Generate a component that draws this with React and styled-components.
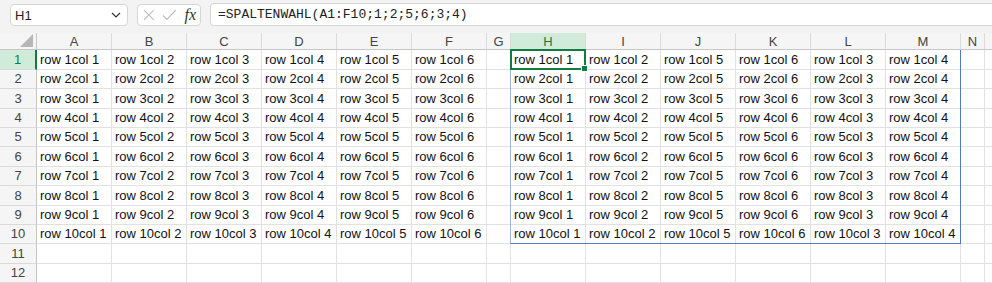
import React from "react";
import styled, { createGlobalStyle } from "styled-components";

const Global = createGlobalStyle`
  html, body { margin: 0; padding: 0; background: #ffffff; overflow: hidden; }
  body { font-family: "Liberation Sans", Arial, sans-serif; }
`;

const Page = styled.div`
  width: 992px;
  height: 283px;
  overflow: hidden;
  background: #ffffff;
`;

const FormulaBar = styled.div`
  display: flex;
  align-items: flex-start;
  gap: 9px;
  height: 33px;
  box-sizing: border-box;
  padding: 4px 0 0 10px;
  background: #f3f3f3;
`;

const Box = styled.div`
  display: flex;
  align-items: center;
  box-sizing: border-box;
  height: 22px;
  background: #ffffff;
  border: 1px solid #d6d6d6;
  border-radius: 4px;
`;

const NameBox = styled(Box)`
  width: 118px;
  justify-content: space-between;
  padding: 0 6px 0 4px;
  font-size: 13px;
  color: #222;
`;

const FxBox = styled(Box)`
  width: 64px;
  gap: 7px;
  padding: 0 4px 0 5px;
`;

const FxText = styled.span`
  font-family: "Liberation Serif", "Times New Roman", serif;
  font-style: italic;
  font-size: 16px;
  color: #333;
  line-height: 1;
  margin-left: 1px;
`;

const FormulaInput = styled(Box)`
  flex: 1;
  margin-top: -1px;
  height: 23px;
  border-right: none;
  border-radius: 4px 0 0 4px;
  padding-left: 7px;
  font-family: "Liberation Mono", "DejaVu Sans Mono", monospace;
  font-size: 13px;
  color: #222;
`;

const Grid = styled.div`
  display: grid;
  grid-template-columns: 37px repeat(6, 75px) 24px repeat(6, 75px) 24px 75px;
  grid-template-rows: 17px 20px 19px 20px 19px 19px 20px 19px 20px 19px 19px 20px 19px;
  font-size: 13px;
`;

const Cell = styled.div`
  grid-row: ${(p) => p.$r};
  grid-column: ${(p) => p.$c};
  box-sizing: border-box;
  border-right: 1px solid #e1e1e1;
  border-bottom: 1px solid #e1e1e1;
  padding: 0 3px 1px 3px;
  display: flex;
  align-items: flex-end;
  line-height: 16px;
  white-space: nowrap;
  color: #111;
`;

const ColHeader = styled.div`
  grid-row: 1;
  grid-column: ${(p) => p.$c};
  box-sizing: border-box;
  display: flex;
  align-items: center;
  justify-content: center;
  border-right: 1px solid #dadada;
  border-bottom: 1px solid #c6c6c6;
  background: ${(p) => (p.$active ? "#d1ebdb" : "#f5f5f5")};
  color: ${(p) => (p.$active ? "#107c41" : "#444")};
  font-size: 13px;
`;

const RowHeader = styled.div`
  grid-row: ${(p) => p.$r};
  grid-column: 1;
  box-sizing: border-box;
  display: flex;
  align-items: flex-end;
  justify-content: center;
  padding-bottom: 1px;
  line-height: 16px;
  border-bottom: 1px solid #dadada;
  border-right: ${(p) => (p.$active ? "2px solid #107c41" : "1px solid #c6c6c6")};
  background: ${(p) => (p.$active ? "#d1ebdb" : "#f5f5f5")};
  color: ${(p) => (p.$active ? "#107c41" : "#444")};
  font-size: 13px;
`;

const Corner = styled.div`
  grid-row: 1;
  grid-column: 1;
  box-sizing: border-box;
  background: #f5f5f5;
  border-right: 1px solid #c6c6c6;
  border-bottom: 1px solid #c6c6c6;
  display: flex;
  align-items: flex-end;
  justify-content: flex-end;
  padding: 0 3px 2px 0;
`;

const SpillOutline = styled.div`
  grid-row: 2 / span 10;
  grid-column: 9 / span 6;
  margin-left: -1px;
  box-sizing: border-box;
  border-left: 1px solid #9db5e0;
  border-right: 1px solid #4f7ac7;
  border-bottom: 1px solid #4f7ac7;
  pointer-events: none;
  z-index: 1;
`;

const ActiveCell = styled.div`
  grid-row: 2;
  grid-column: 9;
  margin: -1px 0 0 -1px;
  box-sizing: border-box;
  border: 2px solid #107c41;
  position: relative;
  pointer-events: none;
  z-index: 2;
`;

const FillHandle = styled.div`
  position: absolute;
  right: -4px;
  bottom: -4px;
  width: 5px;
  height: 5px;
  background: #107c41;
  border: 1px solid #ffffff;
`;

const LETTERS = ["A", "B", "C", "D", "E", "F", "G", "H", "I", "J", "K", "L", "M", "N", ""];
const ORDER = [1, 2, 5, 6, 3, 4];

function cellText(row, colIdx) {
  if (row > 10) return "";
  if (colIdx < 6) return `row ${row}col ${colIdx + 1}`;
  if (colIdx >= 7 && colIdx <= 12) return `row ${row}col ${ORDER[colIdx - 7]}`;
  return "";
}

export default function App() {
  const rows = Array.from({ length: 12 }, (_, i) => i + 1);
  return (
    <Page>
      <Global />
      <FormulaBar>
        <NameBox>
          <span>H1</span>
          <svg width="10" height="6" viewBox="0 0 10 6">
            <path d="M1 1 L5 5 L9 1" fill="none" stroke="#333" strokeWidth="1.2" />
          </svg>
        </NameBox>
        <FxBox>
          <svg width="12" height="12" viewBox="0 0 12 12">
            <path d="M1 1 L11 11 M11 1 L1 11" stroke="#bdbdbd" strokeWidth="1.2" />
          </svg>
          <svg width="15" height="12" viewBox="0 0 15 12">
            <path d="M1 6.5 L5 10.5 L14 1" fill="none" stroke="#bdbdbd" strokeWidth="1.2" />
          </svg>
          <FxText>fx</FxText>
        </FxBox>
        <FormulaInput>=SPALTENWAHL(A1:F10;1;2;5;6;3;4)</FormulaInput>
      </FormulaBar>
      <Grid>
        <Corner>
          <svg width="13" height="13" viewBox="0 0 13 13">
            <path d="M13 0 L13 13 L0 13 Z" fill="#b7b7b7" />
          </svg>
        </Corner>
        {LETTERS.map((l, i) => (
          <ColHeader key={"h" + i} $c={i + 2} $active={l === "H"}>
            {l}
          </ColHeader>
        ))}
        {rows.map((r) => (
          <React.Fragment key={r}>
            <RowHeader $r={r + 1} $active={r === 1}>{r}</RowHeader>
            {LETTERS.map((_, c) => (
              <Cell key={c} $r={r + 1} $c={c + 2}>{cellText(r, c)}</Cell>
            ))}
          </React.Fragment>
        ))}
        <SpillOutline />
        <ActiveCell>
          <FillHandle />
        </ActiveCell>
      </Grid>
    </Page>
  );
}
